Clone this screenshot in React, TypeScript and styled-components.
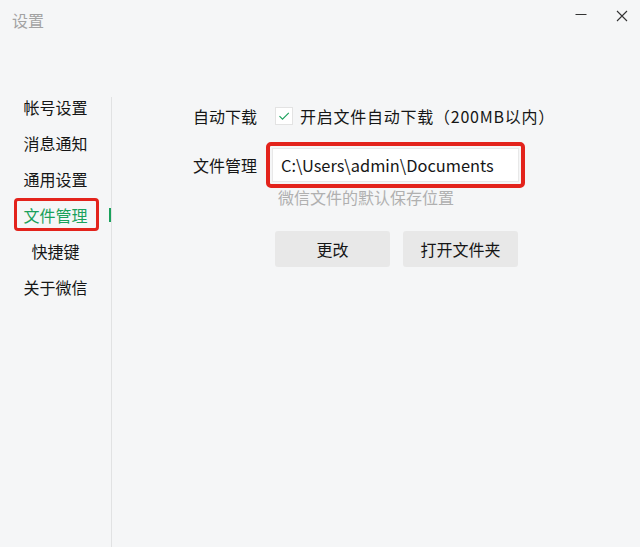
import * as React from 'react'
import styled, { createGlobalStyle } from 'styled-components'

const GlobalStyle = createGlobalStyle`
  html, body {
    margin: 0;
    padding: 0;
    background: #f5f6f7;
  }
  * {
    box-sizing: border-box;
  }
`

const Window = styled.div`
  width: 640px;
  height: 547px;
  display: flex;
  flex-direction: column;
  background: #f5f6f7;
  font-family: "Noto Sans CJK SC", "Noto Sans", sans-serif;
  color: #161616;
  overflow: hidden;
`

const TitleBar = styled.div`
  height: 97px;
  flex: none;
  display: flex;
  align-items: flex-start;
  justify-content: space-between;
  padding: 10px 12px 0 12px;
`

const Title = styled.div`
  font-size: 16px;
  line-height: 20px;
  color: #a3a3a3;
`

const Controls = styled.div`
  display: flex;
  align-items: center;
  gap: 29px;
`

const CtrlButton = styled.div`
  width: 12px;
  height: 12px;
  display: flex;
  align-items: center;
  justify-content: center;
`

const Body = styled.div`
  flex: 1;
  display: flex;
`

const Sidebar = styled.nav`
  width: 112px;
  flex: none;
  border-right: 1px solid #e1e2e3;
  display: flex;
  flex-direction: column;
  align-items: center;
  gap: 16px;
`

const NavItem = styled.div<{ $active?: boolean }>`
  position: relative;
  font-size: 16px;
  line-height: 20px;
  color: ${p => (p.$active ? '#1aa15c' : '#161616')};
`

const Marked = styled.div`
  position: relative;
  border: 3px solid #e3231c;
  border-radius: 4px;
`

const NavMark = styled(Marked)`
  margin: -7px -11px -6px -9px;
  padding: 4px 8px 3px 6px;
`

const ActiveBar = styled.span`
  position: absolute;
  right: -23px;
  top: 3px;
  width: 2px;
  height: 14px;
  background: #1aa15c;
`

const Main = styled.main`
  flex: 1;
  padding: 7px 0 0 81px;
  display: flex;
  flex-direction: column;
`

const Row = styled.div`
  display: flex;
  align-items: center;
  gap: 16px;
`

const Label = styled.div`
  width: 66px;
  flex: none;
  font-size: 16px;
  line-height: 24px;
  color: #161616;
`

const Check = styled.label`
  display: flex;
  align-items: center;
  gap: 7px;
  font-size: 16px;
  line-height: 24px;
  letter-spacing: 0.75px;
`

const Box = styled.span`
  width: 18px;
  height: 18px;
  background: #fff;
  border: 1px solid #e3e3e3;
  display: flex;
  align-items: center;
  justify-content: center;
`

const PathRow = styled(Row)`
  margin-top: 20px;
  gap: 7px;
`

const InputMark = styled(Marked)`
  margin: -6px 0;
  padding: 2px;
  border-width: 4px;
  border-radius: 5px;
`

const PathInput = styled.div`
  width: 247px;
  height: 34px;
  background: #fff;
  border: 1px solid #e8e8e8;
  padding-left: 8px;
  display: flex;
  align-items: center;
  font-size: 16.4px;
  color: #161616;
`

const Hint = styled.div`
  margin: 5px 0 0 85px;
  font-size: 16px;
  line-height: 20px;
  color: #b0b0b0;
`

const Buttons = styled.div`
  margin: 24px 0 0 82px;
  display: flex;
  gap: 13px;
`

const Button = styled.button`
  width: 115px;
  height: 36px;
  border: none;
  border-radius: 3px;
  background: #e8e8e8;
  font-family: inherit;
  font-size: 16px;
  color: #161616;
  padding: 0;
`

const navItems = ['帐号设置', '消息通知', '通用设置', '文件管理', '快捷键', '关于微信']

export default function App() {
  return (
    <Window>
      <GlobalStyle />
      <TitleBar>
        <Title>设置</Title>
        <Controls>
          <CtrlButton>
            <svg width="12" height="12" viewBox="0 0 12 12">
              <path d="M0.5 4.5h11" stroke="#333" strokeWidth="1" />
            </svg>
          </CtrlButton>
          <CtrlButton>
            <svg width="12" height="12" viewBox="0 0 12 12">
              <path d="M1 1l10 10M11 1L1 11" stroke="#333" strokeWidth="1.1" />
            </svg>
          </CtrlButton>
        </Controls>
      </TitleBar>
      <Body>
        <Sidebar>
          {navItems.map(name =>
            name === '文件管理' ? (
              <NavMark key={name}>
                <NavItem $active>
                  {name}
                  <ActiveBar />
                </NavItem>
              </NavMark>
            ) : (
              <NavItem key={name}>{name}</NavItem>
            )
          )}
        </Sidebar>
        <Main>
          <Row>
            <Label>自动下载</Label>
            <Check>
              <Box>
                <svg width="14" height="14" viewBox="0 0 14 14">
                  <path d="M2.5 7.2l3 3L11.8 3.8" fill="none" stroke="#1aa15c" strokeWidth="1.1" />
                </svg>
              </Box>
              开启文件自动下载（200MB以内）
            </Check>
          </Row>
          <PathRow>
            <Label>文件管理</Label>
            <InputMark>
              <PathInput>C:\Users\admin\Documents</PathInput>
            </InputMark>
          </PathRow>
          <Hint>微信文件的默认保存位置</Hint>
          <Buttons>
            <Button>更改</Button>
            <Button>打开文件夹</Button>
          </Buttons>
        </Main>
      </Body>
    </Window>
  )
}
